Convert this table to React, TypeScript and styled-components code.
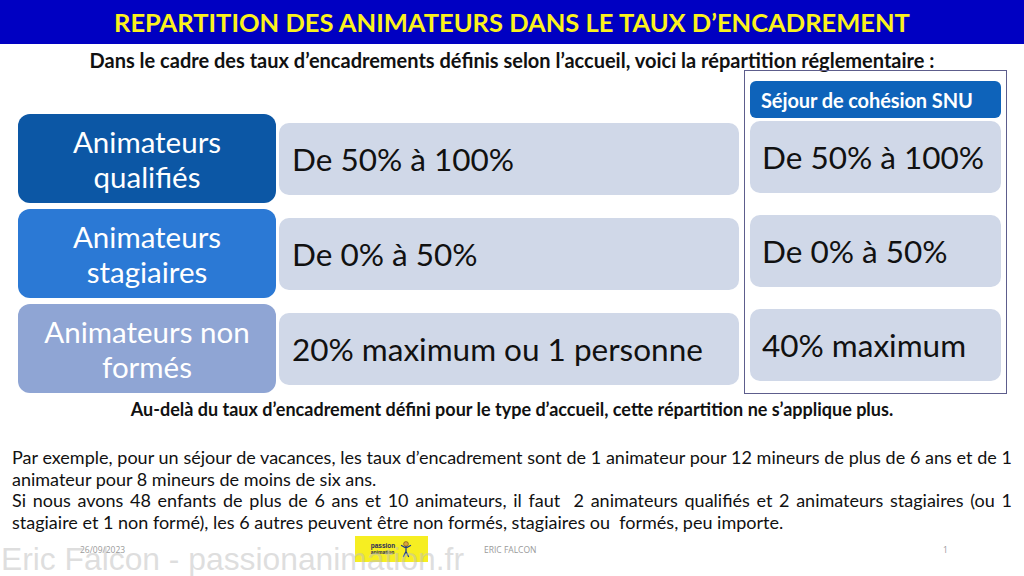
import React from "react";
import styled, { createGlobalStyle } from "styled-components";

const GlobalStyle = createGlobalStyle`
  html, body {
    margin: 0;
    padding: 0;
    background: #ffffff;
  }
  body {
    font-family: "Lato", "Open Sans", sans-serif;
    color: #111111;
  }
`;

type Tone = "dark" | "mid" | "light";

type Row = {
  label: string[];
  tone: Tone;
  value: string;
  snu: string;
};

const rows: Row[] = [
  { label: ["Animateurs", "qualifiés"], tone: "dark", value: "De 50% à 100%", snu: "De 50% à 100%" },
  { label: ["Animateurs", "stagiaires"], tone: "mid", value: "De 0% à 50%", snu: "De 0% à 50%" },
  { label: ["Animateurs non", "formés"], tone: "light", value: "20% maximum ou 1 personne", snu: "40% maximum" },
];

const toneColors: Record<Tone, string> = {
  dark: "#0c57a5",
  mid: "#2b79d5",
  light: "#8fa5d4",
};

export default function App() {
  return (
    <>
      <GlobalStyle />
      <Slide>
        <Header>
          <Title>REPARTITION DES ANIMATEURS DANS LE TAUX D’ENCADREMENT</Title>
        </Header>
        <Intro>
          Dans le cadre des taux d’encadrements définis selon l’accueil, voici la répartition réglementaire :
        </Intro>

        <Board>
          <MainTable>
            {rows.map((row) => (
              <TableRow key={row.value}>
                <Label tone={row.tone}>
                  {row.label.map((line) => (
                    <span key={line}>{line}</span>
                  ))}
                </Label>
                <Value>{row.value}</Value>
              </TableRow>
            ))}
          </MainTable>

          <SnuPanel>
            <SnuHeader>Séjour de cohésion SNU</SnuHeader>
            <SnuList>
              {rows.map((row) => (
                <SnuValue key={row.snu}>{row.snu}</SnuValue>
              ))}
            </SnuList>
          </SnuPanel>
        </Board>

        <Footnote>
          Au-delà du taux d’encadrement défini pour le type d’accueil, cette répartition ne s’applique plus.
        </Footnote>

        <Example>
          <p>
            Par exemple, pour un séjour de vacances, les taux d’encadrement sont de 1 animateur pour 12 mineurs de
            plus de 6 ans et de 1 animateur pour 8 mineurs de moins de six ans.
          </p>
          <p>
            Si nous avons 48 enfants de plus de 6 ans et 10 animateurs, il faut&nbsp; 2 animateurs qualifiés et 2
            animateurs stagiaires (ou 1 stagiaire et 1 non formé), les 6 autres peuvent être non formés, stagiaires
            ou&nbsp; formés, peu importe.
          </p>
        </Example>

        <Footer>
          <FooterDate>26/09/2023</FooterDate>
          <Logo>
            <LogoText>
              <span>passion</span>
              <small>animation</small>
            </LogoText>
            <svg width="12" height="17" viewBox="0 0 12 17">
              <circle cx="6" cy="3" r="2.4" fill="#d9a441" stroke="#6b4a12" strokeWidth="0.6" />
              <path
                d="M6 5.5 V10.5 M1.5 4.5 L6 7 L10.5 4.5 M6 10.5 L3.5 15.5 M6 10.5 L8.5 15.5"
                stroke="#1f3a8a"
                strokeWidth="1.3"
                fill="none"
                strokeLinecap="round"
              />
            </svg>
          </Logo>
          <FooterAuthor>ERIC FALCON</FooterAuthor>
          <FooterPage>1</FooterPage>
        </Footer>

        <Watermark>Eric Falcon - passionanimation.fr</Watermark>
      </Slide>
    </>
  );
}

const Slide = styled.div`
  position: relative;
  width: 1024px;
  height: 576px;
  overflow: hidden;
  background: #ffffff;
  display: flex;
  flex-direction: column;
`;

const Header = styled.header`
  height: 44px;
  flex-shrink: 0;
  background: #0000c2;
  display: flex;
  align-items: center;
  justify-content: center;
`;

const Title = styled.h1`
  margin: 0;
  font-size: 25.5px;
  font-weight: 700;
  color: #fbf21c;
`;

const Intro = styled.div`
  margin-top: 6px;
  height: 20px;
  line-height: 20px;
  text-align: center;
  font-size: 20px;
  font-weight: 700;
  color: #111111;
  white-space: nowrap;
`;

const Board = styled.div`
  height: 324px;
  flex-shrink: 0;
  display: flex;
  gap: 5px;
  padding-left: 18px;
  box-sizing: border-box;
`;

const MainTable = styled.div`
  width: 721px;
  padding-top: 44px;
  display: flex;
  flex-direction: column;
  gap: 6px;
`;

const TableRow = styled.div`
  display: flex;
  align-items: center;
  gap: 3px;
`;

const Label = styled.div<{ tone: Tone }>`
  width: 258px;
  height: 89px;
  border-radius: 12px;
  background: ${({ tone }) => toneColors[tone]};
  color: #ffffff;
  display: flex;
  flex-direction: column;
  align-items: center;
  justify-content: center;
  font-size: 29.5px;
  line-height: 35px;
  white-space: nowrap;
`;

const Value = styled.div`
  width: 460px;
  height: 72px;
  border-radius: 10px;
  background: #d0d8e8;
  display: flex;
  align-items: center;
  padding-left: 13px;
  box-sizing: border-box;
  font-size: 31.5px;
  color: #111111;
  white-space: nowrap;
`;

const SnuPanel = styled.div`
  width: 263px;
  border: 1px solid #5d5d8c;
  box-sizing: border-box;
  padding: 10px 5px 9px 5px;
  display: flex;
  flex-direction: column;
  gap: 3px;
`;

const SnuHeader = styled.div`
  height: 37px;
  border-radius: 6px;
  background: #0e63ba;
  color: #ffffff;
  font-size: 20px;
  font-weight: 700;
  letter-spacing: -0.1px;
  display: flex;
  align-items: center;
  padding-left: 11px;
  white-space: nowrap;
`;

const SnuList = styled.div`
  flex: 1;
  display: flex;
  flex-direction: column;
  gap: 22px;
`;

const SnuValue = styled.div`
  height: 72px;
  border-radius: 10px;
  background: #d0d8e8;
  display: flex;
  align-items: center;
  padding-left: 12px;
  font-size: 31.5px;
  color: #111111;
  white-space: nowrap;
`;

const Footnote = styled.div`
  margin-top: 4px;
  line-height: 22px;
  text-align: center;
  font-size: 18px;
  font-weight: 700;
  color: #111111;
  white-space: nowrap;
`;

const Example = styled.div`
  margin-top: 27px;
  padding: 0 12px;
  font-size: 18px;
  line-height: 21.7px;
  color: #111111;
  text-align: justify;

  p {
    margin: 0;
  }
`;

const Footer = styled.footer`
  height: 30px;
  margin-top: auto;
  margin-bottom: 12px;
  display: flex;
  align-items: center;
  font-family: "Open Sans", sans-serif;
  font-size: 8.5px;
  color: #9a9a9a;
`;

const FooterDate = styled.span`
  margin-left: 80px;
  width: 275px;
`;

const Logo = styled.div`
  width: 73px;
  height: 26px;
  background: #f6ee22;
  display: flex;
  align-items: center;
  justify-content: center;
  gap: 5px;
`;

const LogoText = styled.div`
  display: flex;
  flex-direction: column;
  font-family: "Liberation Sans", sans-serif;
  font-size: 6.5px;
  line-height: 7px;
  font-weight: 700;
  color: #2a2a5a;

  small {
    font-size: 5px;
  }
`;

const FooterAuthor = styled.span`
  margin-left: 56px;
  width: 459px;
`;

const FooterPage = styled.span``;

const Watermark = styled.div`
  position: absolute;
  left: 1px;
  bottom: -2px;
  font-family: "Liberation Sans", Arial, sans-serif;
  font-size: 31.8px;
  color: rgba(190, 190, 190, 0.5);
  white-space: nowrap;
  pointer-events: none;
`;
